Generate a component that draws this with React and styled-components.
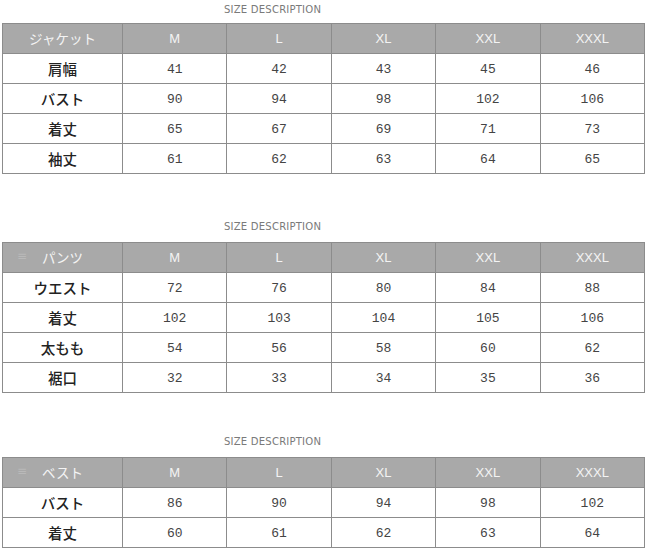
import React from "react";
import styled, { createGlobalStyle } from "styled-components";

const sizes = ["M", "L", "XL", "XXL", "XXXL"];

const tables = [
  {
    title: "ジャケット",
    gapTop: 0,
    gapTitle: 5,
    rows: [
      ["肩幅", 41, 42, 43, 45, 46],
      ["バスト", 90, 94, 98, 102, 106],
      ["着丈", 65, 67, 69, 71, 73],
      ["袖丈", 61, 62, 63, 64, 65],
    ],
  },
  {
    title: "パンツ",
    icon: true,
    gapTop: 43,
    gapTitle: 7,
    rows: [
      ["ウエスト", 72, 76, 80, 84, 88],
      ["着丈", 102, 103, 104, 105, 106],
      ["太もも", 54, 56, 58, 60, 62],
      ["裾口", 32, 33, 34, 35, 36],
    ],
  },
  {
    title: "ベスト",
    icon: true,
    gapTop: 39,
    gapTitle: 7,
    rows: [
      ["バスト", 86, 90, 94, 98, 102],
      ["着丈", 60, 61, 62, 63, 64],
    ],
  },
];

export default function App() {
  return (
    <>
      <GlobalStyle />
      <Page>
        {tables.map((t) => (
          <Section key={t.title} $gapTop={t.gapTop}>
            <Title $gap={t.gapTitle}>SIZE DESCRIPTION</Title>
            <Grid>
              <HeadCell $label>
                {t.icon && <Menu>≡</Menu>}
                {t.title}
              </HeadCell>
              {sizes.map((s) => (
                <HeadCell key={s}>{s}</HeadCell>
              ))}
              {t.rows.map((r) =>
                r.map((v, i) =>
                  i === 0 ? (
                    <LabelCell key={r[0] + i}>{v}</LabelCell>
                  ) : (
                    <NumCell key={r[0] + i}>{v}</NumCell>
                  )
                )
              )}
            </Grid>
          </Section>
        ))}
      </Page>
    </>
  );
}

const GlobalStyle = createGlobalStyle`
  body {
    margin: 0;
    background: #ffffff;
  }
  * {
    box-sizing: border-box;
  }
`;

const Page = styled.div`
  width: 646px;
  padding: 0 1px 0 2px;
  display: flex;
  flex-direction: column;
`;

const Section = styled.section`
  margin-top: ${(p) => p.$gapTop}px;
  display: flex;
  flex-direction: column;
`;

const Title = styled.div`
  height: 18px;
  line-height: 18px;
  padding-top: 1px;
  margin-bottom: ${(p) => p.$gap}px;
  padding-left: 222px;
  font-family: "DejaVu Sans Condensed", "Liberation Sans Narrow", "DejaVu Sans", sans-serif;
  font-stretch: condensed;
  font-size: 11.2px;
  letter-spacing: 0.2px;
  color: #7a7a7a;
`;

const Grid = styled.div`
  display: grid;
  grid-template-columns: 120px repeat(5, 1fr);
  border-top: 1px solid #8c8c8c;
  border-left: 1px solid #8c8c8c;
`;

const Cell = styled.div`
  height: 30px;
  display: flex;
  align-items: center;
  justify-content: center;
  border-right: 1px solid #8c8c8c;
  border-bottom: 1px solid #8c8c8c;
`;

const HeadCell = styled(Cell)`
  position: relative;
  background: #a9a9a9;
  color: #f4f4f4;
  font-family: ${(p) =>
    p.$label
      ? `"Noto Sans CJK JP", sans-serif`
      : `"Liberation Sans", Arial, sans-serif`};
  font-size: ${(p) => (p.$label ? "13.5px" : "13px")};
  padding-bottom: 1px;
`;

const Menu = styled.span`
  position: absolute;
  left: 14px;
  top: 6px;
  font-family: "DejaVu Sans", sans-serif;
  font-size: 12px;
  color: #b9b9b9;
`;

const LabelCell = styled(Cell)`
  font-family: "Noto Sans CJK JP", sans-serif;
  font-size: 14.5px;
  font-weight: 500;
  color: #222222;
`;

const NumCell = styled(Cell)`
  font-family: "Liberation Mono", "DejaVu Sans Mono", monospace;
  font-size: 13px;
  color: #444444;
  padding-top: 2px;
`;
